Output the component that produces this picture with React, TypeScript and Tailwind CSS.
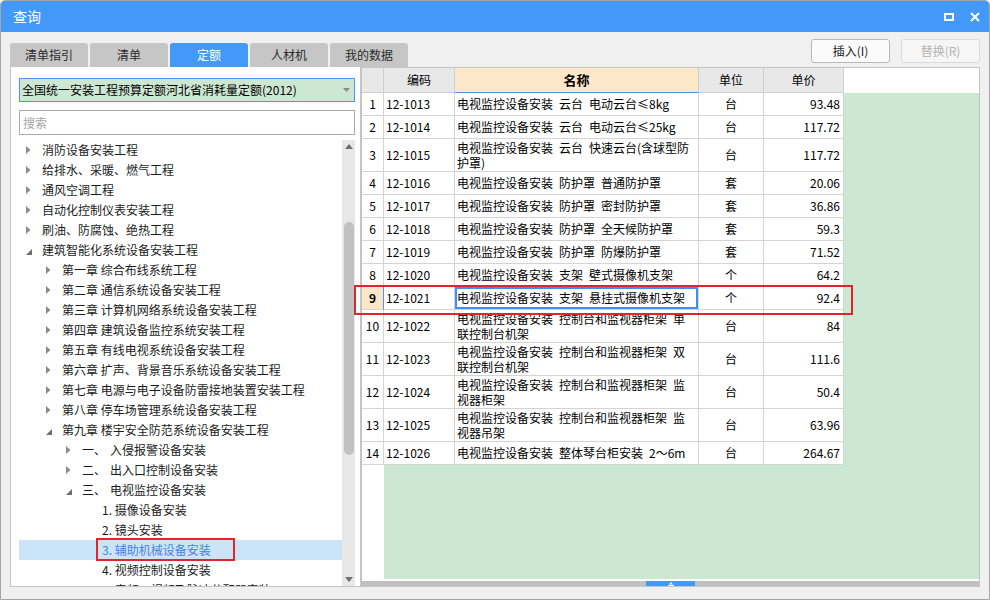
const FONT = "font-['Noto_Sans_CJK_SC','Microsoft_YaHei',sans-serif]";

type TreeNode = { lv: number; text: string; st: 'c' | 'o' | 'n'; num?: string; sel?: boolean };

const tree: TreeNode[] = [
  { lv: 0, text: '消防设备安装工程', st: 'c' },
  { lv: 0, text: '给排水、采暖、燃气工程', st: 'c' },
  { lv: 0, text: '通风空调工程', st: 'c' },
  { lv: 0, text: '自动化控制仪表安装工程', st: 'c' },
  { lv: 0, text: '刷油、防腐蚀、绝热工程', st: 'c' },
  { lv: 0, text: '建筑智能化系统设备安装工程', st: 'o' },
  { lv: 1, text: '第一章 综合布线系统工程', st: 'c' },
  { lv: 1, text: '第二章 通信系统设备安装工程', st: 'c' },
  { lv: 1, text: '第三章 计算机网络系统设备安装工程', st: 'c' },
  { lv: 1, text: '第四章 建筑设备监控系统安装工程', st: 'c' },
  { lv: 1, text: '第五章 有线电视系统设备安装工程', st: 'c' },
  { lv: 1, text: '第六章 扩声、背景音乐系统设备安装工程', st: 'c' },
  { lv: 1, text: '第七章 电源与电子设备防雷接地装置安装工程', st: 'c' },
  { lv: 1, text: '第八章 停车场管理系统设备安装工程', st: 'c' },
  { lv: 1, text: '第九章 楼宇安全防范系统设备安装工程', st: 'o' },
  { lv: 2, num: '一、', text: '入侵报警设备安装', st: 'c' },
  { lv: 2, num: '二、', text: '出入口控制设备安装', st: 'c' },
  { lv: 2, num: '三、', text: '电视监控设备安装', st: 'o' },
  { lv: 3, text: '1. 摄像设备安装', st: 'n' },
  { lv: 3, text: '2. 镜头安装', st: 'n' },
  { lv: 3, text: '3. 辅助机械设备安装', st: 'n', sel: true },
  { lv: 3, text: '4. 视频控制设备安装', st: 'n' },
  { lv: 3, text: '5. 音频、视频及脉冲分配器安装', st: 'n' },
];

const indent = ['pl-[7px]', 'pl-[27px]', 'pl-[47px]', 'pl-[67px]'];

type Row = { n: number; code: string; name: string[]; unit: string; price: string };

const rows: Row[] = [
  { n: 1, code: '12-1013', name: ['电视监控设备安装 云台 电动云台≤8kg'], unit: '台', price: '93.48' },
  { n: 2, code: '12-1014', name: ['电视监控设备安装 云台 电动云台≤25kg'], unit: '台', price: '117.72' },
  { n: 3, code: '12-1015', name: ['电视监控设备安装 云台 快速云台(含球型防', '护罩)'], unit: '台', price: '117.72' },
  { n: 4, code: '12-1016', name: ['电视监控设备安装 防护罩 普通防护罩'], unit: '套', price: '20.06' },
  { n: 5, code: '12-1017', name: ['电视监控设备安装 防护罩 密封防护罩'], unit: '套', price: '36.86' },
  { n: 6, code: '12-1018', name: ['电视监控设备安装 防护罩 全天候防护罩'], unit: '套', price: '59.3' },
  { n: 7, code: '12-1019', name: ['电视监控设备安装 防护罩 防爆防护罩'], unit: '套', price: '71.52' },
  { n: 8, code: '12-1020', name: ['电视监控设备安装 支架 壁式摄像机支架'], unit: '个', price: '64.2' },
  { n: 9, code: '12-1021', name: ['电视监控设备安装 支架 悬挂式摄像机支架'], unit: '个', price: '92.4' },
  { n: 10, code: '12-1022', name: ['电视监控设备安装 控制台和监视器柜架 单', '联控制台机架'], unit: '台', price: '84' },
  { n: 11, code: '12-1023', name: ['电视监控设备安装 控制台和监视器柜架 双', '联控制台机架'], unit: '台', price: '111.6' },
  { n: 12, code: '12-1024', name: ['电视监控设备安装 控制台和监视器柜架 监', '视器柜架'], unit: '台', price: '50.4' },
  { n: 13, code: '12-1025', name: ['电视监控设备安装 控制台和监视器柜架 监', '视器吊架'], unit: '台', price: '63.96' },
  { n: 14, code: '12-1026', name: ['电视监控设备安装 整体琴台柜安装 2～6m'], unit: '台', price: '264.67' },
];

const SELECTED = 9;

function Arrow({ st }: { st: 'c' | 'o' | 'n' }) {
  if (st === 'c')
    return (
      <svg width="5" height="8" viewBox="0 0 5 8">
        <path d="M0 0L4.5 4L0 8Z" fill="#8c8c8c" />
      </svg>
    );
  if (st === 'o')
    return (
      <svg width="6" height="6" viewBox="0 0 6 6" className="mt-[3px]">
        <path d="M6 0V6H0Z" fill="#6e6e6e" />
      </svg>
    );
  return null;
}

function Tabs() {
  const tabs = ['清单指引', '清单', '定额', '人材机', '我的数据'];
  return (
    <div className="flex gap-[2px]">
      {tabs.map((t) => (
        <div
          key={t}
          className={
            t === '定额'
              ? 'w-[78px] h-[24px] rounded-t-[3px] bg-[#4299fa] text-white flex items-center justify-center'
              : 'w-[78px] h-[24px] rounded-t-[3px] bg-[#c6c6c6] text-[#2a2a2a] flex items-center justify-center'
          }
        >
          {t}
        </div>
      ))}
    </div>
  );
}

function LeftPanel() {
  return (
    <div className="w-[351px] min-h-0 overflow-hidden bg-white border border-t-0 border-[#c4c4c4] flex flex-col pt-[11px] pl-[8px] pr-[5px]">
      <div className="h-[24px] shrink-0 bg-[#cde8d2] border border-[#4299fa] flex items-center pl-[2px] pr-[4px]">
        <span className="flex-1 text-black">全国统一安装工程预算定额河北省消耗量定额(2012)</span>
        <svg width="7" height="4" viewBox="0 0 7 4">
          <path d="M0 0H7L3.5 4Z" fill="#8a8a8a" />
        </svg>
      </div>
      <div className="h-[25px] shrink-0 mt-[8px] border border-[#ababab] flex items-center pl-[3px] text-[#a6a6a6]">搜索</div>
      <div className="flex-1 min-h-0 flex mt-[5px] overflow-hidden">
        <div className="w-[323px] overflow-hidden">
          {tree.map((n, i) => (
            <div
              key={i}
              className={`h-[20px] flex items-center whitespace-nowrap ${indent[n.lv]} ${
                n.sel ? 'bg-[#cce4f7] text-[#3d86e6]' : 'text-[#1c1c1c]'
              }`}
            >
              <span className="w-[16px] flex items-center">
                <Arrow st={n.st} />
              </span>
              {n.num && <span className="w-[28px]">{n.num}</span>}
              <span>{n.text}</span>
            </div>
          ))}
        </div>
        <div className="w-[13px] bg-[#e8e8e8] flex flex-col items-center">
          <div className="h-[12px] flex items-center justify-center">
            <svg width="8" height="5" viewBox="0 0 8 5">
              <path d="M4 0L8 5H0Z" fill="#6f6f6f" />
            </svg>
          </div>
          <div className="h-[70px]" />
          <div className="w-[10px] h-[233px] rounded-full bg-[#c1c1c1]" />
          <div className="flex-1" />
          <div className="h-[14px] flex items-center justify-center">
            <svg width="8" height="5" viewBox="0 0 8 5">
              <path d="M0 0H8L4 5Z" fill="#6f6f6f" />
            </svg>
          </div>
        </div>
      </div>
    </div>
  );
}

const sp = (s: string) => s.replace(/ /g, '\u2002');

function RightPanel() {
  const hd = 'h-[25px] bg-[#e8e8e8] border-r border-b border-[#cfcfcf] flex items-center justify-center';
  return (
    <div className="w-[619px] min-h-0 overflow-hidden bg-white border border-[#c4c4c4] flex flex-col">
      <div className="flex h-[25px] shrink-0">
        <div className={`w-[22px] ${hd}`} />
        <div className={`w-[71px] ${hd}`}>编码</div>
        <div className="w-[244px] h-[25px] bg-[#fde7c9] border-r border-[#cfcfcf] border-b border-b-[#4299fa] flex items-center justify-center font-bold text-[13px]">
          名称
        </div>
        <div className={`w-[65px] ${hd}`}>单位</div>
        <div className={`w-[80px] ${hd}`}>单价</div>
        <div className="flex-1 bg-white" />
      </div>
      <div className="flex-1 min-h-0 flex overflow-hidden">
        <div className="w-[22px] bg-white flex flex-col">
          {rows.map((r) => (
            <div
              key={r.n}
              className={`${r.name.length > 1 ? 'h-[33px]' : 'h-[23px]'} shrink-0 border-b border-[#d4d4d4] flex items-center justify-center ${
                r.n === SELECTED ? 'bg-[#fde7c9] font-bold border-r border-r-[#4299fa]' : 'border-r border-r-[#d4d4d4]'
              }`}
            >
              {r.n}
            </div>
          ))}
        </div>
        <div className="flex-1 bg-[#cde8d2] flex flex-col items-start">
          {rows.map((r) => {
            const h = r.name.length > 1 ? 'h-[33px]' : 'h-[23px]';
            const cell = `${h} border-r border-b border-[#d4d4d4] flex items-center`;
            return (
              <div key={r.n} className="flex shrink-0 bg-white">
                <div className={`w-[71px] pl-[2px] ${cell}`}>{r.code}</div>
                <div
                  className={`w-[244px] pl-[2px] ${cell} ${
                    r.n === SELECTED ? 'shadow-[inset_0_0_0_2px_#3b8ff5]' : ''
                  }`}
                >
                  <div className={`whitespace-nowrap ${r.name.length > 1 ? 'leading-[15px]' : ''}`}>
                    {r.name.map((l, i) => (
                      <div key={i}>{sp(l)}</div>
                    ))}
                  </div>
                </div>
                <div className={`w-[65px] justify-center ${cell}`}>{r.unit}</div>
                <div className={`w-[80px] justify-end pr-[3px] ${cell}`}>{r.price}</div>
              </div>
            );
          })}
        </div>
      </div>
      <div className="h-[2px] shrink-0 bg-white" />
      <div className="h-[5px] shrink-0 bg-[#c0c0c0] flex">
        <div className="ml-[284px] w-[49px] h-[5px] bg-[#4299fa] flex items-center justify-center">
          <svg width="6" height="4" viewBox="0 0 6 4">
            <path d="M3 0L5 2.5H1Z M0 3H6V4H0Z" fill="white" />
          </svg>
        </div>
      </div>
    </div>
  );
}

export default function App() {
  return (
    <div
      className={`w-[990px] h-[600px] relative bg-[#f0f0f0] border border-[#a6a6a6] rounded-t-[5px] overflow-hidden flex flex-col text-[12px] ${FONT}`}
    >
      <div className="h-[31px] shrink-0 bg-[#4299fa] flex items-center pl-[12px] pr-[9px]">
        <span className="flex-1 text-white text-[14px]">查询</span>
        <svg width="10" height="8" viewBox="0 0 10 8" className="mr-[16px]">
          <rect x="1" y="1" width="8" height="6" fill="none" stroke="white" strokeWidth="2" />
        </svg>
        <svg width="10" height="10" viewBox="0 0 10 10">
          <path d="M1 1L9 9M9 1L1 9" stroke="white" strokeWidth="2" />
        </svg>
      </div>
      <div className="h-[35px] shrink-0 flex items-end justify-between pl-[9px] pr-[9px]">
        <Tabs />
        <div className="flex gap-[11px] self-start mt-[7px]">
          <div className="w-[79px] h-[24px] bg-[#fbfbfb] border border-[#b9b9b9] rounded-[3px] flex items-center justify-center text-[#222]">
            插入(I)
          </div>
          <div className="w-[79px] h-[24px] bg-[#f6f6f6] border border-[#dadada] rounded-[3px] flex items-center justify-center text-[#b4b4b4]">
            替换(R)
          </div>
        </div>
      </div>
      <div className="flex-1 min-h-0 flex pl-[9px] pb-[12px]">
        <LeftPanel />
        <RightPanel />
      </div>
      <div className="absolute left-[95px] top-[537px] w-[139px] h-[23px] border-2 border-[#e3242b]" />
      <div className="absolute left-[353px] top-[284px] w-[499px] h-[30px] border-2 border-[#e3242b]" />
    </div>
  );
}
